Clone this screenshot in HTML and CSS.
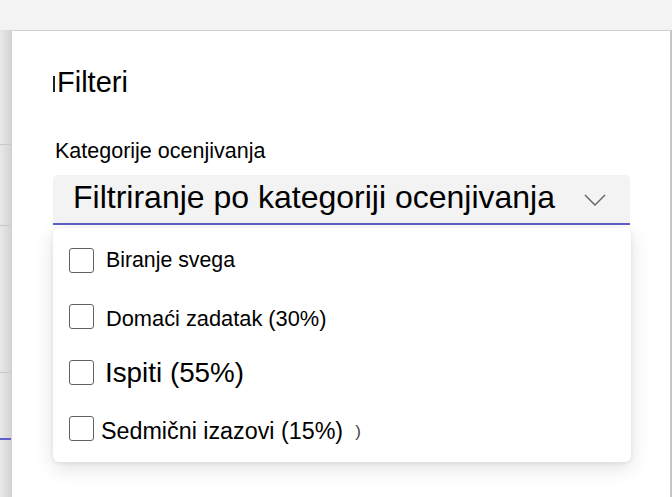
FILE: index.html
```html
<!DOCTYPE html>
<html lang="sr">
<head>
  <meta charset="UTF-8">
  <title>Filteri</title>
  <link rel="stylesheet" href="styles.css">
</head>
<body>
  <div class="topbar"></div>
  <div class="main">
    <div class="side">
      <div class="side-row r1"></div>
      <div class="side-row r2"></div>
      <div class="side-row r3"></div>
      <div class="side-row r4"></div>
    </div>
    <div class="panel">
      <h2 class="title"><span class="caret"></span>Filteri</h2>
      <div class="field">
        <label class="label">Kategorije ocenjivanja</label>
        <div class="select">
          <span class="select-text">Filtriranje po kategoriji ocenjivanja</span>
          <svg class="chevron" width="22" height="12" viewBox="0 0 22 12">
            <path d="M1 1 L11 11 L21 1" fill="none" stroke="#616161" stroke-width="1.4"/>
          </svg>
        </div>
        <div class="menu">
          <div class="opt"><span class="box"></span><span class="opt-text t1">Biranje svega</span></div>
          <div class="opt"><span class="box"></span><span class="opt-text t2">Domaći zadatak (30%)</span></div>
          <div class="opt"><span class="box"></span><span class="opt-text t3">Ispiti (55%)</span></div>
          <div class="opt"><span class="box"></span><span class="opt-text t4">Sedmični izazovi (15%)</span><span class="stray">)</span></div>
        </div>
      </div>
    </div>
  </div>
</body>
</html>
```

FILE: styles.css
```css
body {
  margin: 0;
  font-family: "Liberation Sans", Arial, sans-serif;
  background: #f3f3f3;
  color: #000;
  height: 497px;
  overflow: hidden;
}

.topbar {
  height: 30px;
  background: #f3f3f3;
}

.main {
  display: flex;
  height: 467px;
}

.side {
  width: 11px;
  background: linear-gradient(to right, #e9e9e9, #d4d4d4);
}

.side-row {
  border-bottom: 1px solid #c8c8c8;
}

.r1 { height: 114px; }
.r2 { height: 80px; }
.r3 { height: 146px; }
.r4 { height: 65px; border-bottom: 2px solid #5b5fc7; }

.panel {
  flex: 1;
  background: #fff;
  border-top: 1px solid #d1d1d1;
  border-left: 1px solid #d1d1d1;
  border-right: 2px solid #c6c6c6;
  padding: 35px 40px 0 41px;
  position: relative;
}

.title {
  margin: 0;
  font-size: 29px;
  font-weight: normal;
  line-height: 32px;
  display: flex;
  align-items: center;
}

.caret {
  width: 2px;
  height: 16px;
  margin: 4px 2px 0 0;
  background: #222;
}

.field {
  margin-top: 41px;
  position: relative;
}

.label {
  display: block;
  font-size: 21.5px;
  line-height: 24px;
  margin-left: 2px;
}

.select {
  margin-top: 12px;
  height: 48px;
  background: #f3f3f3;
  border-radius: 5px 5px 0 0;
  border-bottom: 2px solid #5b5fc7;
  display: flex;
  align-items: center;
  justify-content: space-between;
  padding: 0 24px 0 20px;
}

.select-text {
  font-size: 32px;
  margin-bottom: 3px;
}

.chevron {
  display: block;
  margin-top: 2px;
}

.menu {
  position: absolute;
  left: 0;
  right: -1px;
  top: 89px;
  height: 234px;
  background: #fff;
  border-radius: 6px;
  box-shadow: 0 6px 20px rgba(0, 0, 0, 0.12), 0 1px 4px rgba(0, 0, 0, 0.08);
  padding-top: 20px;
  box-sizing: border-box;
}

.opt {
  display: flex;
  align-items: center;
  height: 25px;
  margin-bottom: 31px;
  padding-left: 16px;
}

.box {
  width: 23px;
  height: 23px;
  border: 1px solid #616161;
  border-radius: 3px;
  flex: none;
}

.opt-text {
  margin-left: 12px;
}

.t1 { font-size: 21.3px; }
.t2 { font-size: 21.8px; padding-top: 4px; }
.t3 { font-size: 27.8px; margin-left: 11px; }
.t4 { font-size: 23.3px; margin-left: 7px; padding-top: 6px; }

.stray {
  font-size: 17px;
  color: #444;
  margin-left: 12px;
  padding-top: 6px;
}
```
